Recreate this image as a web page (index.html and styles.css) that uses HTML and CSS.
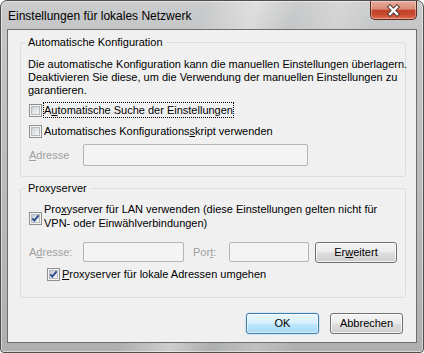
FILE: index.html
```html
<!DOCTYPE html>
<html lang="de">
<head>
<meta charset="utf-8">
<title>Einstellungen für lokales Netzwerk</title>
<link rel="stylesheet" href="styles.css">
</head>
<body>
<div class="window">
  <div class="titlebar">
    <span class="title">Einstellungen für lokales Netzwerk</span>
    <button class="close" aria-label="Schließen">
      <svg width="15" height="13" viewBox="0 0 15 13">
        <path d="M4 3 L11 10 M11 3 L4 10" stroke="#5a3a34" stroke-width="4.4" stroke-linecap="square" fill="none"/>
        <path d="M4 3 L11 10 M11 3 L4 10" stroke="#ffffff" stroke-width="2.4" stroke-linecap="square" fill="none"/>
      </svg>
    </button>
  </div>
  <div class="client">
    <fieldset class="group g1">
      <legend>Automatische Konfiguration</legend>
      <p class="desc">Die automatische Konfiguration kann die manuellen Einstellungen überlagern.<br>Deaktivieren Sie diese, um die Verwendung der manuellen Einstellungen zu<br>garantieren.</p>
      <div class="check first"><span class="box"><span class="inner"></span></span><span class="cb-label focus">A<u>u</u>tomatische Suche der Einstellungen</span></div>
      <div class="check second"><span class="box"><span class="inner"></span></span><span class="cb-label">Automatisches Konfigurations<u>s</u>kript verwenden</span></div>
      <div class="field-row g1-row"><span class="lbl disabled"><u>A</u>dresse</span><span class="input addr-wide"></span></div>
    </fieldset>
    <fieldset class="group g2">
      <legend>Proxyserver</legend>
      <div class="check multi"><span class="box"><span class="inner checked"><svg width="9" height="9" viewBox="0 0 9 9"><path d="M1.3 4.3 L3.3 6.6 L7.6 1.4" stroke="#2d4a8f" stroke-width="1.9" fill="none"/></svg></span></span><span class="cb-label">Pro<u>x</u>yserver für LAN verwenden (diese Einstellungen gelten nicht für<br>VPN- oder Einwählverbindungen)</span></div>
      <div class="field-row g2-row">
        <span class="lbl disabled">A<u>d</u>resse:</span><span class="input addr-short"></span>
        <span class="lbl port disabled">Por<u>t</u>:</span><span class="input port-input"></span>
        <button class="btn advanced">Er<u>w</u>eitert</button>
      </div>
      <div class="check indent"><span class="box"><span class="inner checked"><svg width="9" height="9" viewBox="0 0 9 9"><path d="M1.3 4.3 L3.3 6.6 L7.6 1.4" stroke="#2d4a8f" stroke-width="1.9" fill="none"/></svg></span></span><span class="cb-label"><u>P</u>roxyserver für lokale Adressen umgehen</span></div>
    </fieldset>
    <div class="buttons">
      <button class="btn default">OK</button>
      <button class="btn">Abbrechen</button>
    </div>
  </div>
</div>
</body>
</html>
```
FILE: styles.css
```css
* { box-sizing: border-box; }
html, body { margin: 0; padding: 0; background: #ffffff; }
body {
  font-family: "Liberation Sans", Arial, sans-serif;
  font-size: 11px;
  line-height: 14px;
  color: #000;
}
.window {
  width: 424px;
  height: 353px;
  border: 1px solid #4e4e4e;
  border-radius: 7px 7px 4px 4px;
  padding: 0 6px 9px;
  display: flex;
  flex-direction: column;
  overflow: hidden;
  background:
    linear-gradient(104deg, rgba(255,255,255,0) 40%, rgba(255,255,255,.38) 50%, rgba(255,255,255,0) 58%, rgba(255,255,255,.22) 67%, rgba(255,255,255,0) 75%),
    linear-gradient(to bottom, #cbcccd 0, #c4c5c6 30px, #aeafb0 100%);
  box-shadow: inset 0 0 0 1px rgba(255,255,255,.5);
}
.titlebar {
  height: 28px;
  flex: none;
  display: flex;
  align-items: flex-start;
}
.title { margin: 8px 0 0 1px; white-space: nowrap; font-size: 12px; }
.close {
  margin-left: auto;
  width: 47px;
  height: 19px;
  padding: 0;
  border: 1px solid #5e2a1f;
  border-top: none;
  border-radius: 0 0 5px 5px;
  display: flex;
  align-items: center;
  justify-content: center;
  background: linear-gradient(to bottom, #e7ab9c 0%, #d98c78 45%, #c3432b 52%, #c8492f 75%, #df6d4f 100%);
  box-shadow: inset 0 0 0 1px rgba(255,255,255,.35);
}
.client {
  flex: 1;
  border: 1px solid #6e6e6e;
  background: #f0f0f0;
  display: flex;
  flex-direction: column;
}
.group {
  margin: 0 10px 0 12px;
  padding: 0 7px;
  border: 1px solid #d5dfe5;
  border-radius: 3px;
  min-width: 0;
}
.g1 { margin-top: 5px; padding-bottom: 10px; }
.g2 { margin-top: 4px; padding-bottom: 15px; }
legend { padding: 0 3px; margin-left: -3px; line-height: 14px; }
.desc { margin: 9px 0 0; line-height: 13px; white-space: nowrap; }
.check { display: flex; align-items: center; height: 16px; }
.check.first { margin-top: 5px; }
.check.second { margin-top: 5px; }
.check.multi { height: auto; align-items: flex-start; margin-top: 6px; }
.check.multi .box { margin-top: 11px; }
.check.indent { margin-top: 3px; padding-left: 18px; }
.box {
  width: 13px;
  height: 13px;
  flex: none;
  margin: 0 1px;
  border: 1px solid #8e8f8f;
  background: #f5f5f5;
  padding: 1px;
}
.inner {
  display: block;
  width: 9px;
  height: 9px;
  border: 1px solid #b6b9bd;
  background: linear-gradient(135deg, #c9cdd3 0%, #e6e7e9 55%, #f8f8f8 100%);
  position: relative;
}
.inner.checked { background: linear-gradient(135deg, #c3cad3 0%, #e2e6ea 60%, #f5f6f7 100%); }
.inner svg { position: absolute; left: -1px; top: -1px; overflow: visible; }
.cb-label { border: 1px solid transparent; white-space: nowrap; line-height: 14px; }
.cb-label.focus { border: 1px dotted #000; }
.field-row { display: flex; }
.g1-row { margin-top: 5px; align-items: center; }
.g2-row { margin-top: 11px; align-items: flex-start; }
.lbl { width: 54px; margin-left: 1px; flex: none; white-space: nowrap; }
.g2-row .lbl { margin-top: 3px; }
.lbl.port { width: 36px; margin-left: 9px; }
.disabled { color: #a0a0a0; }
.input {
  display: block;
  flex: none;
  border: 1px solid #b3b6b9;
  border-radius: 2px;
  background: #f4f4f4;
}
.addr-wide { width: 225px; height: 22px; }
.addr-short { width: 101px; height: 20px; }
.port-input { width: 80px; height: 20px; }
.btn {
  font: inherit;
  color: #000;
  padding: 0;
  height: 21px;
  width: 73px;
  border: 1px solid #707070;
  border-radius: 3px;
  background: linear-gradient(to bottom, #f3f3f3 0%, #ebebeb 48%, #dddddd 52%, #cfcfcf 100%);
  box-shadow: inset 0 0 0 1px rgba(255,255,255,.75);
  line-height: 17px;
}
.advanced { width: 82px; margin-left: 6px; }
.buttons {
  display: flex;
  justify-content: flex-end;
  gap: 11px;
  margin: 15px 13px 0 0;
}
.btn.default {
  border-color: #3c7fb1;
  background: linear-gradient(to bottom, #eaf6fd 0%, #d9f0fc 48%, #bee6fd 52%, #a7d9f5 100%);
  box-shadow: inset 0 0 0 1px rgba(255,255,255,.6), 0 0 2px rgba(80,160,220,.5);
}
u { text-decoration: underline; }
```
